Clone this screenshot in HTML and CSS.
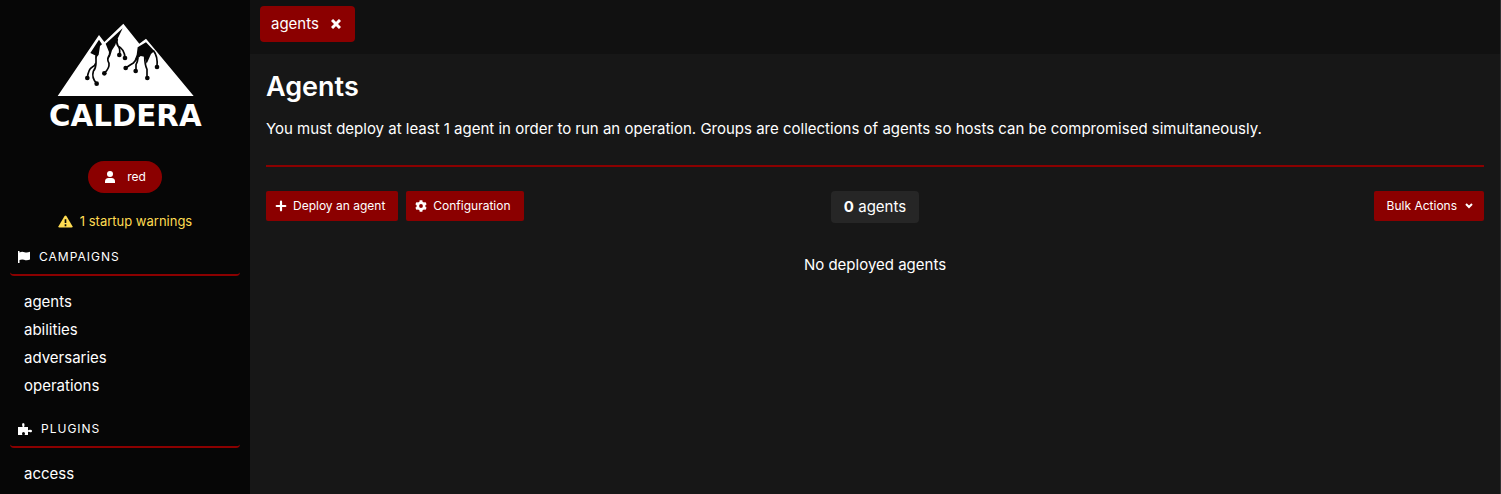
FILE: index.html
```
<!DOCTYPE html>
<html lang="en">
<head>
<meta charset="utf-8">
<title>Caldera</title>
<link rel="stylesheet" href="styles.css">
</head>
<body>
<div class="app">
  <aside class="sidebar">
    <svg class="logo" viewBox="0 0 510 390" role="img" aria-label="Caldera">
      <path fill="#fff" d="M53 258 L177 75 L193 96 L250 41 L298 101 L318 86 L461 258Z"/>
      <g fill="#060606">
        <path d="M151 129L177 89L186 103L180 108L176 134L166 147L168 137Z"/>
        <path d="M197 101L248 55L230 92L226 105L216 121L211 137L204 149L207 126Z"/>
        <path d="M293 112L318 97L343 123L333 132L320 161L313 140L302 138L294 145L283 152L290 134Z"/>
        <circle cx="142" cy="204" r="7"/><circle cx="170" cy="221" r="7"/><circle cx="193" cy="190" r="7"/>
        <circle cx="238" cy="135" r="7"/><circle cx="255" cy="144" r="7"/><circle cx="257" cy="174" r="7"/>
        <circle cx="287" cy="183" r="7"/><circle cx="322" cy="204" r="7"/><circle cx="351" cy="171" r="7"/>
      </g>
      <g fill="none" stroke="#060606" stroke-width="5">
        <path d="M168 136V158Q166 166 156 172Q145 178 142 204M168 158Q168 174 160 184Q154 204 170 221M208 136Q199 148 207 160Q209 174 193 190M232 86Q228 98 234 108Q242 116 238 135M234 108Q254 118 255 144M292 142Q286 154 280 159Q270 165 257 174M294 144Q293 156 288 164V183M314 138Q314 164 321 178V204M340 122Q354 138 351 171"/>
      </g>
      <text class="logo-text" x="256" y="347" text-anchor="middle">CALDERA</text>
    </svg>
    <div class="user">
      <svg class="icon" viewBox="0 0 12 12"><circle cx="6" cy="3" r="3"/><path d="M1 12V10.500Q1 7 4.500 7H7.500Q11 7 11 10.500V12Z"/></svg>
      <span>red</span>
    </div>
    <a class="warning" href="#warnings">
      <svg class="warning-icon" viewBox="0 0 16 14"><path d="M8 .5Q8.700 .5 9 1L15.500 12Q16 13.500 14.500 13.500H1.500Q0 13.500 .5 12L7 1Q7.300 .5 8 .5Z"/><path d="M8 4.500V8.500M8 10V12" stroke="#060606" stroke-width="1.800"/></svg>
      <span>1 startup warnings</span>
    </a>
    <nav class="menu">
      <h2 class="menu-title"><svg class="icon" viewBox="0 0 12 12"><path d="M0 0H1.500V1.500Q4 0 6.500 1.200Q9 2 12 .8V8.500Q9 10 6 8.800Q4 8 1.500 9V12H0Z"/></svg><span>CAMPAIGNS</span></h2>
      <ul class="menu-list">
        <li><a href="#agents">agents</a></li>
        <li><a href="#abilities">abilities</a></li>
        <li><a href="#adversaries">adversaries</a></li>
        <li><a href="#operations">operations</a></li>
      </ul>
      <h2 class="menu-title"><svg class="puzzle-icon" viewBox="0 0 14 12"><path d="M0 4H4.500Q4.800 3.500 4.200 2.500Q3.500 0 5.200 0Q7 0 6.500 2.500Q5.900 3.500 6.300 4H10V7Q10.500 7.500 11.500 6.800Q14 6.200 14 8Q14 10 11.500 9Q10.500 8.500 10 9V12H6.800Q6.500 11.500 7 10.500Q7 9 5.500 9Q4 9 4 10.500Q4.500 11.500 4.200 12H0Z"/></svg><span>PLUGINS</span></h2>
      <ul class="menu-list">
        <li><a href="#access">access</a></li>
      </ul>
    </nav>
  </aside>
  <div class="workspace">
    <div class="tabs">
      <div class="tab"><span>agents</span><button class="tab-close" type="button" aria-label="Close agents"><svg class="close-icon" viewBox="0 0 10 10"><path d="M1 1L9 9M9 1L1 9"/></svg></button></div>
    </div>
    <main class="page">
      <h1 class="title">Agents</h1>
      <p class="intro">You must deploy at least 1 agent in order to run an operation. Groups are collections of agents so hosts can be compromised simultaneously.</p>
      <hr class="rule">
      <div class="toolbar">
        <div class="actions">
          <button class="button" type="button"><svg class="icon" viewBox="0 0 12 12"><path d="M6 1.700V10.300M1.700 6H10.300" stroke="#fff" stroke-width="2.200" stroke-linecap="round"/></svg><span>Deploy an agent</span></button>
          <button class="button" type="button"><svg class="icon" viewBox="0 0 12 12"><circle cx="6" cy="6" r="3.200" fill="none" stroke="#fff" stroke-width="2.600"/><path d="M6 .2V2M6 10V11.800M1 3.100L2.600 4M9.400 8L11 8.900M11 3.100L9.400 4M2.600 8L1 8.900" stroke="#fff" stroke-width="2.800"/></svg><span>Configuration</span></button>
        </div>
        <div class="count"><strong>0</strong> agents</div>
        <button class="button bulk" type="button"><span>Bulk Actions</span><svg class="chevron" viewBox="0 0 8 6"><path d="M1 1L4 4L7 1"/></svg></button>
      </div>
      <p class="empty">No deployed agents</p>
    </main>
  </div>
</div>
</body>
</html>
```
FILE: styles.css
```
* { box-sizing: border-box; }
body { margin: 0; background: #171717; color: #fff; font: 15px/24px Inter, "Liberation Sans", sans-serif; overflow: hidden; }
h1, h2, p, ul { margin: 0; padding: 0; }
ul { list-style: none; }
a { color: inherit; text-decoration: none; }
button { font: inherit; color: inherit; border: 0; padding: 0; background: none; cursor: pointer; }
svg { flex: none; fill: currentColor; }
.app { display: flex; height: 100vh; }
.sidebar { display: flex; flex-direction: column; align-items: center; flex: 0 0 250px; padding: 10px 10px 0; background: #060606; overflow: hidden; }
.sidebar > * { flex: none; }
.logo { width: 170px; height: 130px; }
.logo-text { font: 700 88px "DejaVu Sans", sans-serif; fill: #fff; }
.icon { width: 12px; height: 12px; }
.user { display: flex; align-items: center; gap: 11px; height: 32px; margin-top: 21px; padding: 0 16px; border-radius: 16px; background: #8b0000; font-size: 12px; }
.warning { display: flex; align-items: center; gap: 7px; margin-top: 16px; color: #ffdc52; font-size: 13px; }
.warning-icon { width: 15px; height: 13px; }
.menu { width: 100%; margin-top: 7px; }
.menu-title { display: flex; align-items: center; gap: 9px; height: 36px; padding: 0 8px 1px; border-bottom: 2px solid #8b0000; border-radius: 4px; font-size: 12px; font-weight: 400; letter-spacing: 1px; }
.puzzle-icon { width: 14px; height: 12px; }
.menu-list { padding: 12px 14px; }
.menu-list li { height: 28px; line-height: 28px; }
.workspace { display: flex; flex: 1; flex-direction: column; min-width: 0; border-right: 1px solid #333; }
.tabs { padding: 6px 10px 12px; background: #111; }
.tab { display: inline-flex; align-items: center; gap: 12px; height: 36px; padding: 0 14px 0 11px; border-radius: 4px; background: #8b0000; vertical-align: top; }
.tab-close { display: flex; }
.close-icon { width: 10px; height: 10px; stroke: #fff; stroke-width: 3; }
.page { padding: 16px; }
.title { font-size: 27px; line-height: 34px; font-weight: 600; }
.intro { margin-top: 13px; }
.rule { height: 2px; margin: 24px 0; border: 0; background: #8b0000; }
.toolbar { display: grid; grid-template-columns: 1fr auto 1fr; align-items: start; }
.actions { display: flex; gap: 8px; }
.button { display: flex; align-items: center; gap: 6px; height: 30px; padding: 0 13px 0 9px; border-radius: 2px; background: #8b0000; font-size: 12px; white-space: nowrap; }
.bulk { justify-self: end; gap: 8px; padding: 0 11px 0 13px; }
.chevron { width: 8px; height: 6px; fill: none; stroke: #fff; stroke-width: 2; }
.count { padding: 4px 13px; border-radius: 4px; background: #262626; }
.empty { margin-top: 30px; text-align: center; }
```
